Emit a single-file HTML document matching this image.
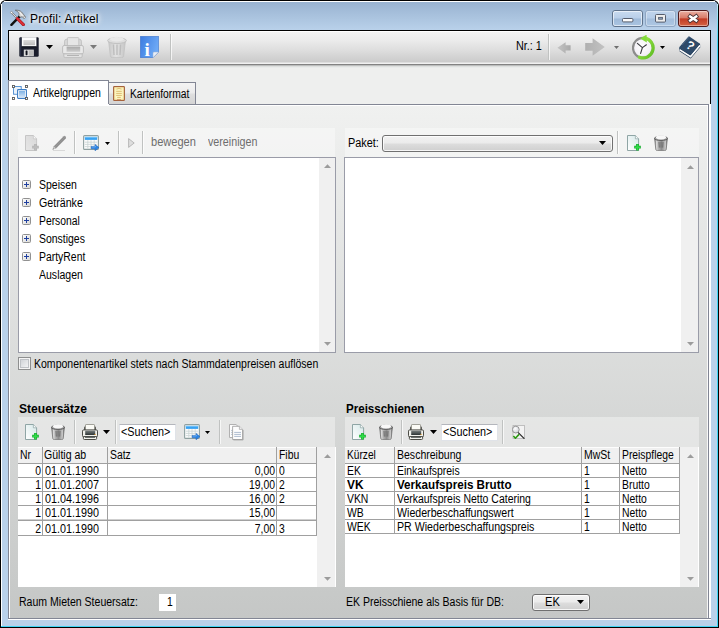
<!DOCTYPE html>
<html lang="de"><head><meta charset="utf-8"><title>Profil: Artikel</title>
<style>
html,body{margin:0;padding:0;background:#fff;}
body{width:719px;height:628px;overflow:hidden;position:relative;font-family:"Liberation Sans",sans-serif;font-size:11px;color:#000;}
div,svg{position:absolute;box-sizing:border-box;}
.t{white-space:pre;font-size:12px;line-height:14px;color:#000;transform:scaleX(.865);transform-origin:0 0;}
.r{width:200px;text-align:right;transform-origin:100% 0;}
.b{white-space:pre;font-size:12px;line-height:14px;font-weight:bold;color:#000;transform:scaleX(.93);transform-origin:0 0;}
.h{white-space:pre;font-size:12px;line-height:14px;font-weight:bold;color:#000;transform:scaleX(.97);transform-origin:0 0;}
.s{white-space:pre;font-size:12px;line-height:14px;color:#000;transform:scaleX(.88);transform-origin:0 0;}
#win{left:0;top:0;width:719px;height:628px;border-radius:6px 6px 0 0;background:#000;overflow:hidden;}
#frame{left:1px;top:1px;width:717px;height:626px;border-radius:5px 5px 0 0;background:linear-gradient(#9ab4d2 0px,#9ab4d2 2px,#b9d1ea 29px,#b9d1ea 100%);}
.hl{background:#fff;}
#tb{left:9px;top:31px;width:701px;height:31px;background:linear-gradient(#ffffff 0px,#ffffff 1px,#f3f3f3 1px,#ececec 9px,#dedede 19px,#cbcbcb 31px);}
#page{left:8px;top:104px;width:701px;height:515px;border:1px solid #828694;background:linear-gradient(#f0f1f0 0px,#c5c7c6 513px);}
.strip{background:rgba(255,255,255,0.38);}
.box{background:#fff;border:1px solid #9a9ca8;}
.sb{background:#f0f0f0;}
.sep{width:1px;background:#c0c2c1;}
.sep:after{content:"";position:absolute;left:1px;top:0;width:1px;height:100%;background:rgba(255,255,255,0.7);}
.combo{border:1px solid #707070;border-radius:3px;background:linear-gradient(#f2f2f2 0%,#ebebeb 48%,#dddddd 52%,#cfcfcf 100%);box-shadow:inset 0 0 0 1px rgba(255,255,255,0.8);}
.arr{width:0;height:0;border-left:3.5px solid transparent;border-right:3.5px solid transparent;border-top:4px solid #000;}
.arrs{width:0;height:0;border-left:3px solid transparent;border-right:3px solid transparent;border-top:3px solid #000;}
.hdr{background:#f0f0f0;border-top:1px solid #fdfdfd;}
.gl{background:#a0a0a0;}
.srch{background:#fff;border:1px solid #e0e3e8;border-top-color:#b4b6bc;}
</style></head>
<body>
<div id="win"><div id="frame"></div>
<div class="hl" style="left:4px;top:1px;width:711px;height:1px"></div>
<div class="hl" style="left:1px;top:4px;width:1px;height:623px"></div>
<div style="left:717px;top:4px;width:1px;height:623px;background:linear-gradient(#bfeaf7 0px,#8fe2f6 14px,#3fd4f4 40px)"></div>
<div style="left:1px;top:626px;width:717px;height:1px;background:#3fd4f4"></div>
<svg style="left:9px;top:8px" width="18" height="18" viewBox="9 8 18 18">
<path d="M19.9 16.1L11.4 24.8" stroke="#111" stroke-width="2.4" stroke-linecap="round"/>
<path d="M15.2 10.2C17.6 9.9 20.2 10.6 21.6 12L23.4 14.2L25.2 16.6C25.4 17.8 24.6 18.6 23.6 18.2L22.2 16.8L20.2 17.2L18.8 15.6C19.6 13.6 18.2 11.4 15.2 10.2Z" fill="#d8d8d8" stroke="#5c5c5c" stroke-width=".7"/>
<path d="M20 12.4L22.6 16" stroke="#f0f0f0" stroke-width="1.2"/>
<path d="M11.6 12.6L17 18" stroke="#707070" stroke-width="1.7" stroke-linecap="round"/>
<path d="M11.6 12.6L17 18" stroke="#f2f2f2" stroke-width=".8" stroke-linecap="round"/>
<circle cx="11.5" cy="12.5" r="1.1" fill="#fff" stroke="#808080" stroke-width=".6"/>
<path d="M17.3 18.5L23.4 24.6" stroke="#a01018" stroke-width="3" stroke-linecap="round"/>
<path d="M17.3 18.5L23.4 24.6" stroke="#e0303a" stroke-width="1.8" stroke-linecap="round"/>
<circle cx="24.4" cy="17.4" r=".9" fill="#fff" stroke="#666" stroke-width=".5"/>
</svg>
<div class="s" style="left:30px;top:12px;font-size:12px;letter-spacing:0.13px;transform:none;text-shadow:0 0 4px #fff,0 0 6px #fff,0 0 8px rgba(255,255,255,.8)">Profil: Artikel</div>
<svg style="left:608px;top:6px" width="104" height="24" viewBox="608 6 104 24"><defs>
<linearGradient id="g1" x1="0" y1="0" x2="0" y2="1"><stop offset="0" stop-color="#cadcf0"/><stop offset=".47" stop-color="#b9cfe9"/><stop offset=".53" stop-color="#9fbad9"/><stop offset="1" stop-color="#abc5e2"/></linearGradient>
<linearGradient id="g2" x1="0" y1="0" x2="0" y2="1"><stop offset="0" stop-color="#c0d4ec"/><stop offset=".47" stop-color="#b6cde8"/><stop offset=".53" stop-color="#a3bddb"/><stop offset="1" stop-color="#afc8e4"/></linearGradient>
<linearGradient id="g3" x1="0" y1="0" x2="0" y2="1"><stop offset="0" stop-color="#ebb3a6"/><stop offset=".45" stop-color="#d97c6a"/><stop offset=".53" stop-color="#c23c26"/><stop offset="1" stop-color="#d66646"/></linearGradient>
</defs>
<rect x="612.5" y="10.5" width="30" height="16" rx="2.5" fill="url(#g1)" stroke="#5f738c"/>
<rect x="613.5" y="11.5" width="28" height="14" rx="1.5" fill="none" stroke="#fff" stroke-opacity=".6"/>
<rect x="622.5" y="18.5" width="10.4" height="3.4" rx="1" fill="#fbfbfb" stroke="#555c6c" stroke-width="1"/>
<rect x="645.5" y="10.5" width="30" height="16" rx="2.5" fill="url(#g2)" stroke="#8fa6c2"/>
<rect x="646.5" y="11.5" width="28" height="14" rx="1.5" fill="none" stroke="#fff" stroke-opacity=".35"/>
<rect x="655.5" y="14.5" width="10" height="7.6" rx="1" fill="#ececec" stroke="#555c6c" stroke-width="1"/>
<rect x="658.6" y="17.4" width="3.8" height="1.8" fill="#8fa9c8" stroke="#555c6c" stroke-width=".9"/>
<rect x="678.5" y="10.5" width="30" height="16" rx="2.5" fill="url(#g3)" stroke="#4e1a1c"/>
<rect x="679.5" y="11.5" width="28" height="14" rx="1.5" fill="none" stroke="#fff" stroke-opacity=".4"/>
<path d="M690.2 16.4L696.2 20.6M696.2 16.4L690.2 20.6" stroke="#4a3236" stroke-width="4.2" stroke-linecap="square"/>
<path d="M690.2 16.4L696.2 20.6M696.2 16.4L690.2 20.6" stroke="#fff" stroke-width="2.5" stroke-linecap="square"/>
</svg>
<div style="left:8px;top:30px;width:703px;height:590px;background:#000"></div>
<div style="left:9px;top:31px;width:701px;height:587px;background:#eeefee"></div>
<div style="left:8px;top:80px;width:1px;height:539px;background:#828694"></div>
<div style="left:709px;top:104px;width:2px;height:516px;background:#fff"></div>
<div style="left:8px;top:618px;width:703px;height:1px;background:#828694"></div>
<div style="left:8px;top:619px;width:703px;height:1px;background:#fff"></div>
<div id="tb"></div>
<div style="left:9px;top:62px;width:701px;height:1px;background:#dedede"></div>
<div style="left:9px;top:63px;width:701px;height:1px;background:#f0f0f0"></div>
<div style="left:9px;top:64px;width:701px;height:1px;background:#828282"></div>
<div style="left:9px;top:65px;width:701px;height:1px;background:#bcbebd"></div>
<div style="left:9px;top:66px;width:701px;height:1px;background:#dddfde"></div>
<div style="left:9px;top:67px;width:701px;height:1px;background:#e9ebea"></div>
<svg style="left:19px;top:37px" width="20" height="20" viewBox="0 0 20 20"><defs><linearGradient id="g4" x1="0" y1="0" x2="0" y2="1"><stop offset="0" stop-color="#dcdcdc"/><stop offset="1" stop-color="#bcbcbc"/></linearGradient></defs>
<rect x=".3" y=".3" width="19.4" height="19.4" rx="1.2" fill="#1b1e2d"/>
<rect x="1" y="1" width="1.2" height="18" fill="#2c3146"/>
<rect x="2.8" y=".2" width="14.6" height="9.2" fill="#fdfdfd"/>
<rect x="4.4" y="3" width="11.6" height="5.2" fill="url(#g4)"/>
<rect x="2.8" y="9.4" width="14.6" height="1" fill="#0d0f18"/>
<rect x="4.8" y="12.6" width="10" height="6.6" fill="#d9d9d9"/>
<rect x="10" y="13.4" width="4" height="5.2" fill="#bdbdbd"/>
<rect x="6.6" y="13.6" width="1.9" height="4.6" rx=".8" fill="#10121c"/></svg>
<svg style="left:46px;top:45px" width="7" height="4" viewBox="0 0 7 4"><path d="M0 0H7L3.5 4Z" fill="#000"/></svg>
<svg style="left:62px;top:37px" width="22" height="22" viewBox="0 0 22 22"><defs><linearGradient id="g5" x1="0" y1="0" x2="0" y2="1"><stop offset="0" stop-color="#a9a9a9"/><stop offset="1" stop-color="#cdcdcd"/></linearGradient></defs>
<path d="M2.6 9V4.2Q2.6 2.4 4.4 2.4H17.6Q19.4 2.4 19.4 4.2V9Z" fill="#d9d9d9" stroke="#bebebe" stroke-width=".9"/>
<rect x="5.4" y=".6" width="11.4" height="9" rx=".8" fill="#e6e6e6" stroke="#c2c2c2" stroke-width=".9"/>
<rect x=".6" y="8.5" width="20.8" height="8.4" rx="1.6" fill="#e9e9e9" stroke="#b9b9b9" stroke-width=".9"/>
<rect x="4.6" y="9.6" width="13.6" height="5.2" fill="url(#g5)"/>
<path d="M1.8 16.9H20.2V19.2Q20.2 20.6 18.8 20.6H3.2Q1.8 20.6 1.8 19.2Z" fill="#e2e2e2" stroke="#bcbcbc" stroke-width=".9"/>
<rect x="5" y="18" width="12" height="1" fill="#b4b4b4"/></svg>
<svg style="left:90px;top:45px" width="7" height="4" viewBox="0 0 7 4"><path d="M0 0H7L3.5 4Z" fill="#7a7a7a"/></svg>
<svg style="left:107px;top:36px" width="20" height="22" viewBox="0 0 20 22"><defs><linearGradient id="g6" x1="0" y1="0" x2="1" y2="0"><stop offset="0" stop-color="#c9c9c9"/><stop offset=".45" stop-color="#e2e2e2"/><stop offset="1" stop-color="#c6c6c6"/></linearGradient></defs>
<path d="M1.6 5L3.4 20.2Q3.6 21.6 5.4 21.6H14.6Q16.4 21.6 16.6 20.2L18.4 5Z" fill="url(#g6)" stroke="#c2c2c2" stroke-width=".8"/>
<path d="M6.4 8.5L7 19M10 8.5V19M13.6 8.5L13 19" stroke="#bdbdbd" stroke-width="1.4"/>
<ellipse cx="10" cy="4.6" rx="9.4" ry="2.9" fill="#dedede" stroke="#bdbdbd" stroke-width=".9"/>
<path d="M2.6 3.6Q4 .4 7 1.4Q9 -.2 11.6 1.2Q15 .2 17.4 3.6Q14 5.6 10 5.6Q5 5.6 2.6 3.6Z" fill="#e9e9e9"/></svg>
<svg style="left:140px;top:36px" width="19" height="22" viewBox="0 0 19 22"><defs><linearGradient id="g7" x1="0" y1="0" x2="1" y2=".4"><stop offset="0" stop-color="#3c7be0"/><stop offset="1" stop-color="#6eaaf6"/></linearGradient></defs>
<path d="M.3 .3H18.7V16L13 21.7H.3Z" fill="url(#g7)" stroke="#3a6ec4" stroke-width=".6"/>
<path d="M13 21.7V17Q13 16 14 16H18.7Z" fill="#e9eef6" stroke="#9ab0d0" stroke-width=".5"/>
<text x="7.1" y="19.8" font-family="Liberation Serif,serif" font-weight="bold" font-size="19" text-anchor="middle" fill="#fff">i</text></svg>
<div class="sep" style="left:170px;top:34px;height:26px"></div>
<div class="s" style="left:516px;top:39px;transform:scaleX(0.903);">Nr.: 1</div>
<div class="sep" style="left:548px;top:34px;height:26px"></div>
<svg style="left:557px;top:42px" width="14" height="12" viewBox="0 0 14 12"><defs><linearGradient id="g8" x1="0" y1="0" x2="1" y2="0"><stop offset="0" stop-color="#c4c4c4"/><stop offset="1" stop-color="#a9a9a9"/></linearGradient></defs>
<path d="M.4 5.8L8.6 .2V3.2H13.6V8.6H8.6V11.6Z" fill="url(#g8)"/></svg>
<svg style="left:585px;top:38px" width="20" height="18" viewBox="0 0 20 18"><defs><linearGradient id="g9" x1="0" y1="0" x2="1" y2="0"><stop offset="0" stop-color="#b0b0b0"/><stop offset="1" stop-color="#c2c2c2"/></linearGradient></defs>
<path d="M19.8 9L7.6 .2V5H.2V12.8H7.6V17.8Z" fill="url(#g9)"/></svg>
<svg style="left:614px;top:46px" width="5" height="3" viewBox="0 0 5 3"><path d="M0 0H5L2.5 3Z" fill="#6e6e6e"/></svg>
<svg style="left:632px;top:35px" width="23" height="25" viewBox="0 0 23 25"><defs><radialGradient id="g10" cx=".45" cy=".42" r=".62"><stop offset="0" stop-color="#fff"/><stop offset=".72" stop-color="#f3f0f6"/><stop offset="1" stop-color="#cfccd4"/></radialGradient>
<linearGradient id="g11" x1="0" y1="0" x2="1" y2="1"><stop offset="0" stop-color="#a6ee4e"/><stop offset="1" stop-color="#5cbc22"/></linearGradient></defs>
<circle cx="11" cy="12.9" r="10" fill="url(#g10)" stroke="#8c8c8c" stroke-width="2.2"/>
<path d="M12.4 3A10 10 0 1 1 7.4 22.2" fill="none" stroke="url(#g11)" stroke-width="3.2" stroke-linecap="round"/>
<path d="M14.6 -.4L8.2 3.6L14.8 7.6Z" fill="#84dc3a"/>
<path d="M10.4 12.6L5.4 8.4M10.4 12.6L14.4 9.8M10.4 12.6L8.6 18.4" stroke="#3a3a3e" stroke-width="1.15" stroke-linecap="round"/></svg>
<svg style="left:660px;top:46px" width="5" height="3" viewBox="0 0 5 3"><path d="M0 0H5L2.5 3Z" fill="#000"/></svg>
<svg style="left:679px;top:36px" width="22" height="23" viewBox="0 0 22 23"><path d="M.2 12.2L.5 15.2L11.7 22.4L21.3 11.2L21 7.7Z" fill="#1f3854"/>
<path d="M.6 13.6L11.6 20.6L21 9.4" fill="none" stroke="#fbfbfb" stroke-width="1.7"/>
<path d="M10 .3L21 7.7L11.7 18.9L.6 12.4Q-.2 11.6 .6 10.8Z" fill="#2e4a69"/>
<path d="M10 .8L3 8.8" stroke="#48627f" stroke-width="1.2"/>
<text x="11.4" y="13.8" font-family="Liberation Sans,sans-serif" font-weight="bold" font-size="12" text-anchor="middle" fill="#fff" transform="rotate(33 11.4 9.6)">?</text></svg>
<div id="page"></div>
<div class="hl" style="left:9px;top:105px;width:699px;height:1px"></div>
<div class="hl" style="left:9px;top:105px;width:1px;height:513px"></div>
<div class="hl" style="left:707px;top:105px;width:1px;height:513px;opacity:.8"></div>
<div style="left:108px;top:82px;width:88px;height:22px;border:1px solid #828694;border-bottom:none;border-left:none;background:linear-gradient(#f4f4f4 0%,#ececec 45%,#dedede 55%,#d4d4d4 100%)"></div>
<div style="left:8px;top:80px;width:101px;height:24px;border:1px solid #828694;border-bottom:none;background:#fff"></div>
<div style="left:9px;top:104px;width:100px;height:2px;background:#fff"></div>
<svg style="left:12px;top:85px" width="16" height="15" viewBox="0 0 16 15"><defs><linearGradient id="g12" x1="0" y1="0" x2="0" y2="1"><stop offset="0" stop-color="#7fb2e4"/><stop offset="1" stop-color="#cfe2f6"/></linearGradient></defs>
<rect x="1.6" y="1.6" width="7.6" height="7.6" fill="#fdfeff" stroke="#4a8bd0" stroke-width="1"/>
<rect x="2.6" y="2.6" width="5.6" height="5.6" fill="#eaf2fb"/>
<rect x="5.6" y="4.6" width="8.8" height="8.8" rx=".6" fill="#fff" stroke="#3b7cc4" stroke-width="1.1"/>
<rect x="7" y="6" width="6" height="6" fill="url(#g12)"/>
<g fill="#fff" stroke="#5a5a5a" stroke-width=".9"><rect x=".5" y=".5" width="2" height="2"/><rect x="13.5" y=".5" width="2" height="2"/><rect x=".5" y="12.5" width="2" height="2"/><rect x="13.5" y="12.5" width="2" height="2"/></g></svg>
<div class="t" style="left:33px;top:86px;transform:scaleX(0.877);">Artikelgruppen</div>
<svg style="left:113px;top:86px" width="12" height="15" viewBox="0 0 12 15"><rect x=".7" y=".7" width="10.6" height="13.6" rx=".6" fill="#fdf8c6" stroke="#a5623c" stroke-width="1.3"/>
<rect x="1.8" y="1.8" width="8.4" height="11.4" fill="none" stroke="#f3e19a" stroke-width=".8"/>
<path d="M3.4 3.1Q6 1.9 8.6 3.1" fill="none" stroke="#d9b566" stroke-width=".9"/>
<path d="M3.2 5.3H8.8M3.2 7.4H8.8M3.2 9.4H8.8M4.2 11.4H7.8" stroke="#d9b566" stroke-width=".9"/>
<path d="M4 13.6H8" stroke="#c98a5a" stroke-width=".8"/></svg>
<div class="t" style="left:130px;top:87px;transform:scaleX(0.856);">Kartenformat</div>
<div class="strip" style="left:18px;top:128px;width:317px;height:29px"></div>
<div class="strip" style="left:345px;top:128px;width:354px;height:29px"></div>
<svg style="left:25px;top:135px" width="15" height="17" viewBox="0 0 15 17"><defs><linearGradient id="g13" x1="1" y1="0" x2="0" y2="1"><stop offset="0" stop-color="#d8d8d8"/><stop offset="1" stop-color="#e6e6e6"/></linearGradient></defs>
<path d="M.5 .5H8.4L11.6 3.8V15.5H.5Z" fill="url(#g13)" stroke="#c6c6c6" stroke-width="1" stroke-linejoin="round"/>
<path d="M8.4 .5V3.8H11.6" fill="#fff" fill-opacity=".8" stroke="#c6c6c6" stroke-width=".7"/>
<path d="M10.5 8.9V15.5M7.2 12.2H13.8" stroke="#b4b4b4" stroke-width="2.8"/>
<path d="M10.5 9.5V14.9M7.8 12.2H13.2" stroke="#bdbdbd" stroke-width="1.6"/></svg>
<svg style="left:52px;top:135px" width="15" height="16" viewBox="0 0 15 16"><path d="M.6 14.6L1.8 11.2L11.6 1.2Q12.6 .4 13.6 1.4Q14.6 2.4 13.8 3.4L4 13.4Z" fill="#9a9a9a"/>
<path d="M2.6 11.6L12.2 2M3.6 12.6L13.2 3" stroke="#808080" stroke-width=".6"/>
<path d="M.6 14.6L1.8 11.2L4 13.4Z" fill="#c8c8c8"/><path d="M.6 14.6L1.2 13.2L2 14Z" fill="#707070"/>
<path d="M1 15.5H13" stroke="#d0d0d0" stroke-width=".8"/></svg>
<div class="sep" style="left:74px;top:131px;height:23px"></div>
<svg style="left:83px;top:135px" width="17" height="16" viewBox="0 0 17 16"><rect x=".6" y=".6" width="14.8" height="13.8" rx="1" fill="#fbfcfc" stroke="#8fa0a0" stroke-width="1.1"/>
<rect x="1.8" y="1.9" width="12.4" height="3" fill="#39a2f2"/>
<rect x="1.8" y="1.9" width="12.4" height="1" fill="#6dc0fa"/>
<path d="M1.8 7.2H14.2M1.8 9.4H14.2M1.8 11.6H14.2M4.8 5.2V13.6M8 5.2V13.6M11.2 5.2V13.6" stroke="#c9d3d3" stroke-width=".8"/>
<path d="M8.2 11.4H12V9.4L16 12.6L12 15.8V13.8H8.2Z" fill="#2b84e4" stroke="#1a62b8" stroke-width=".5"/>
<path d="M9 12H12.4V10.8" stroke="#8cc4fa" stroke-width=".6" fill="none"/></svg>
<svg style="left:105px;top:142px" width="5" height="3" viewBox="0 0 5 3"><path d="M0 0H5L2.5 3Z" fill="#000"/></svg>
<div class="sep" style="left:118px;top:131px;height:23px"></div>
<svg style="left:128px;top:138px" width="7" height="10" viewBox="0 0 7 10"><path d="M.6 .6L6.2 5L.6 9.4Z" fill="#dedede" stroke="#b2b2b2" stroke-width=".9" stroke-linejoin="round"/></svg>
<div class="sep" style="left:142px;top:131px;height:23px"></div>
<div class="s" style="left:151px;top:135px;transform:scaleX(0.922);color:#6d6d6d">bewegen</div>
<div class="s" style="left:208px;top:135px;transform:scaleX(0.892);color:#6d6d6d">vereinigen</div>
<div class="s" style="left:348px;top:136px;transform:scaleX(0.908);">Paket:</div>
<div class="combo" style="left:382px;top:135px;width:231px;height:17px"></div>
<svg style="left:599px;top:141px" width="7" height="4" viewBox="0 0 7 4"><path d="M0 0H7L3.5 4Z" fill="#000"/></svg>
<div class="sep" style="left:617px;top:131px;height:23px"></div>
<svg style="left:627px;top:135px" width="15" height="17" viewBox="0 0 15 17"><defs><linearGradient id="g14" x1="1" y1="0" x2="0" y2="1"><stop offset="0" stop-color="#d6e8e8"/><stop offset="1" stop-color="#ffffff"/></linearGradient></defs>
<path d="M.5 .5H8.4L11.6 3.8V15.5H.5Z" fill="url(#g14)" stroke="#8fa5a5" stroke-width="1" stroke-linejoin="round"/>
<path d="M8.4 .5V3.8H11.6" fill="#fff" fill-opacity=".8" stroke="#8fa5a5" stroke-width=".7"/>
<path d="M10.5 8.9V15.5M7.2 12.2H13.8" stroke="#14a82c" stroke-width="2.8"/>
<path d="M10.5 9.5V14.9M7.8 12.2H13.2" stroke="#2fdc48" stroke-width="1.6"/></svg>
<svg style="left:654px;top:135px" width="14" height="16" viewBox="0 0 14 16"><defs><linearGradient id="g15" x1="0" y1="0" x2="1" y2="0"><stop offset="0" stop-color="#646464"/><stop offset=".13" stop-color="#dcdcdc"/><stop offset=".3" stop-color="#b2b2b2"/><stop offset=".55" stop-color="#8c8c8c"/><stop offset=".85" stop-color="#c6c6c6"/><stop offset="1" stop-color="#626262"/></linearGradient></defs>
<path d="M.6 3.4L1.8 14.4Q2 15.6 3.4 15.6H10.6Q12 15.6 12.2 14.4L13.4 3.4Z" fill="url(#g15)" stroke="#6a6a6a" stroke-width=".7"/>
<path d="M5 7L5.3 12.6M7 7V12.6M9 7L8.7 12.6" stroke="#6e6e6e" stroke-width="1"/>
<ellipse cx="7" cy="3.4" rx="6.6" ry="2.1" fill="#9c9c9c" stroke="#5e5e5e" stroke-width=".9"/>
<path d="M1.6 3Q2.4 .2 4.8 .9Q7 -.4 9.2 .8Q11.8 .2 12.4 3Q10 4.6 7 4.6Q3.8 4.6 1.6 3Z" fill="#f8f8f8"/></svg>
<div class="box" style="left:18px;top:157px;width:318px;height:196px"></div>
<div class="sb" style="left:319px;top:158px;width:16px;height:194px"></div>
<svg style="left:324px;top:164px" width="7" height="4" viewBox="0 0 7 4"><path d="M0 4L3.5 0.2L7 4Z" fill="#9c9c9c"/></svg>
<svg style="left:324px;top:342px" width="7" height="4" viewBox="0 0 7 4"><path d="M0 0L3.5 3.8L7 0Z" fill="#9c9c9c"/></svg>
<svg style="left:22px;top:180px" width="9" height="9" viewBox="0 0 9 9"><defs><linearGradient id="g16" x1="0" y1="0" x2="1" y2="1"><stop offset="0" stop-color="#fff"/><stop offset="1" stop-color="#d6d6d2"/></linearGradient></defs><rect x=".5" y=".5" width="8" height="8" rx="1" fill="url(#g16)" stroke="#919191"/><path d="M2 4.5H7M4.5 2V7" stroke="#1f3f9f" stroke-width="1"/></svg>
<div class="t" style="left:39px;top:178px;transform:scaleX(0.874);">Speisen</div>
<svg style="left:22px;top:198px" width="9" height="9" viewBox="0 0 9 9"><defs><linearGradient id="g17" x1="0" y1="0" x2="1" y2="1"><stop offset="0" stop-color="#fff"/><stop offset="1" stop-color="#d6d6d2"/></linearGradient></defs><rect x=".5" y=".5" width="8" height="8" rx="1" fill="url(#g17)" stroke="#919191"/><path d="M2 4.5H7M4.5 2V7" stroke="#1f3f9f" stroke-width="1"/></svg>
<div class="t" style="left:39px;top:196px;transform:scaleX(0.889);">Getränke</div>
<svg style="left:22px;top:216px" width="9" height="9" viewBox="0 0 9 9"><defs><linearGradient id="g18" x1="0" y1="0" x2="1" y2="1"><stop offset="0" stop-color="#fff"/><stop offset="1" stop-color="#d6d6d2"/></linearGradient></defs><rect x=".5" y=".5" width="8" height="8" rx="1" fill="url(#g18)" stroke="#919191"/><path d="M2 4.5H7M4.5 2V7" stroke="#1f3f9f" stroke-width="1"/></svg>
<div class="t" style="left:39px;top:214px;transform:scaleX(0.863);">Personal</div>
<svg style="left:22px;top:234px" width="9" height="9" viewBox="0 0 9 9"><defs><linearGradient id="g19" x1="0" y1="0" x2="1" y2="1"><stop offset="0" stop-color="#fff"/><stop offset="1" stop-color="#d6d6d2"/></linearGradient></defs><rect x=".5" y=".5" width="8" height="8" rx="1" fill="url(#g19)" stroke="#919191"/><path d="M2 4.5H7M4.5 2V7" stroke="#1f3f9f" stroke-width="1"/></svg>
<div class="t" style="left:39px;top:232px;transform:scaleX(0.871);">Sonstiges</div>
<svg style="left:22px;top:252px" width="9" height="9" viewBox="0 0 9 9"><defs><linearGradient id="g20" x1="0" y1="0" x2="1" y2="1"><stop offset="0" stop-color="#fff"/><stop offset="1" stop-color="#d6d6d2"/></linearGradient></defs><rect x=".5" y=".5" width="8" height="8" rx="1" fill="url(#g20)" stroke="#919191"/><path d="M2 4.5H7M4.5 2V7" stroke="#1f3f9f" stroke-width="1"/></svg>
<div class="t" style="left:39px;top:250px;transform:scaleX(0.868);">PartyRent</div>
<div class="t" style="left:39px;top:268px;transform:scaleX(0.877);">Auslagen</div>
<div class="box" style="left:344px;top:157px;width:355px;height:196px"></div>
<div class="sb" style="left:681px;top:158px;width:17px;height:194px"></div>
<svg style="left:687px;top:165px" width="7" height="4" viewBox="0 0 7 4"><path d="M0 4L3.5 0.2L7 4Z" fill="#9c9c9c"/></svg>
<svg style="left:687px;top:342px" width="7" height="4" viewBox="0 0 7 4"><path d="M0 0L3.5 3.8L7 0Z" fill="#9c9c9c"/></svg>
<svg style="left:18px;top:357px" width="13" height="13" viewBox="0 0 13 13"><defs><linearGradient id="g21" x1="0" y1="0" x2="1" y2="1"><stop offset="0" stop-color="#cfd2d6"/><stop offset="1" stop-color="#f4f5f6"/></linearGradient></defs><rect x=".5" y=".5" width="12" height="12" fill="#f4f4f4" stroke="#8e8f8f"/><rect x="2.5" y="2.5" width="8" height="8" fill="url(#g21)" stroke="#bfc2c6"/></svg>
<div class="t" style="left:34px;top:357px;transform:scaleX(0.877);">Komponentenartikel stets nach Stammdatenpreisen auflösen</div>
<div class="h" style="left:19px;top:402px;transform:scaleX(1.008);">Steuersätze</div>
<div class="h" style="left:346px;top:402px;transform:scaleX(0.963);">Preisschienen</div>
<div class="strip" style="left:18px;top:417px;width:317px;height:30px"></div>
<div class="strip" style="left:345px;top:417px;width:354px;height:30px"></div>
<svg style="left:25px;top:424px" width="15" height="17" viewBox="0 0 15 17"><defs><linearGradient id="g22" x1="1" y1="0" x2="0" y2="1"><stop offset="0" stop-color="#d6e8e8"/><stop offset="1" stop-color="#ffffff"/></linearGradient></defs>
<path d="M.5 .5H8.4L11.6 3.8V15.5H.5Z" fill="url(#g22)" stroke="#8fa5a5" stroke-width="1" stroke-linejoin="round"/>
<path d="M8.4 .5V3.8H11.6" fill="#fff" fill-opacity=".8" stroke="#8fa5a5" stroke-width=".7"/>
<path d="M10.5 8.9V15.5M7.2 12.2H13.8" stroke="#14a82c" stroke-width="2.8"/>
<path d="M10.5 9.5V14.9M7.8 12.2H13.2" stroke="#2fdc48" stroke-width="1.6"/></svg>
<svg style="left:51px;top:424px" width="14" height="16" viewBox="0 0 14 16"><defs><linearGradient id="g23" x1="0" y1="0" x2="1" y2="0"><stop offset="0" stop-color="#646464"/><stop offset=".13" stop-color="#dcdcdc"/><stop offset=".3" stop-color="#b2b2b2"/><stop offset=".55" stop-color="#8c8c8c"/><stop offset=".85" stop-color="#c6c6c6"/><stop offset="1" stop-color="#626262"/></linearGradient></defs>
<path d="M.6 3.4L1.8 14.4Q2 15.6 3.4 15.6H10.6Q12 15.6 12.2 14.4L13.4 3.4Z" fill="url(#g23)" stroke="#6a6a6a" stroke-width=".7"/>
<path d="M5 7L5.3 12.6M7 7V12.6M9 7L8.7 12.6" stroke="#6e6e6e" stroke-width="1"/>
<ellipse cx="7" cy="3.4" rx="6.6" ry="2.1" fill="#9c9c9c" stroke="#5e5e5e" stroke-width=".9"/>
<path d="M1.6 3Q2.4 .2 4.8 .9Q7 -.4 9.2 .8Q11.8 .2 12.4 3Q10 4.6 7 4.6Q3.8 4.6 1.6 3Z" fill="#f8f8f8"/></svg>
<div class="sep" style="left:74px;top:420px;height:24px"></div>
<svg style="left:82px;top:424px" width="16" height="16" viewBox="0 0 16 16"><defs><linearGradient id="g24" x1="0" y1="0" x2="0" y2="1"><stop offset="0" stop-color="#7a8080"/><stop offset="1" stop-color="#2e3434"/></linearGradient></defs>
<path d="M2 6.4V3.4Q2 2.4 3 2.4H13Q14 2.4 14 3.4V6.4Z" fill="#5a5a56"/>
<rect x="3.5" y=".5" width="9" height="6" rx=".6" fill="#fbfbf6" stroke="#8d8d84" stroke-width=".8"/>
<rect x=".5" y="5.9" width="15" height="7" rx="1.2" fill="#f1f1ec" stroke="#4b4b45" stroke-width="1"/>
<rect x="3.2" y="6.6" width="10" height="4.4" fill="url(#g24)"/>
<rect x="12.6" y="10" width="1" height="1" fill="#f0a020"/>
<path d="M1.4 12.6H14.6V14.6Q14.6 15.5 13.6 15.5H2.4Q1.4 15.5 1.4 14.6Z" fill="#f1f1ec" stroke="#4b4b45" stroke-width="1"/>
<rect x="3" y="12.6" width="10" height="1.1" fill="#3a3f3f"/></svg>
<svg style="left:103px;top:430px" width="7" height="4" viewBox="0 0 7 4"><path d="M0 0H7L3.5 4Z" fill="#000"/></svg>
<div class="sep" style="left:115px;top:420px;height:24px"></div>
<div class="srch" style="left:119px;top:424px;width:57px;height:17px"></div>
<div class="s" style="left:121px;top:425px;transform:scaleX(0.901);">&lt;Suchen&gt;</div>
<svg style="left:184px;top:424px" width="17" height="16" viewBox="0 0 17 16"><rect x=".6" y=".6" width="14.8" height="13.8" rx="1" fill="#fbfcfc" stroke="#8fa0a0" stroke-width="1.1"/>
<rect x="1.8" y="1.9" width="12.4" height="3" fill="#39a2f2"/>
<rect x="1.8" y="1.9" width="12.4" height="1" fill="#6dc0fa"/>
<path d="M1.8 7.2H14.2M1.8 9.4H14.2M1.8 11.6H14.2M4.8 5.2V13.6M8 5.2V13.6M11.2 5.2V13.6" stroke="#c9d3d3" stroke-width=".8"/>
<path d="M8.2 11.4H12V9.4L16 12.6L12 15.8V13.8H8.2Z" fill="#2b84e4" stroke="#1a62b8" stroke-width=".5"/>
<path d="M9 12H12.4V10.8" stroke="#8cc4fa" stroke-width=".6" fill="none"/></svg>
<svg style="left:205px;top:431px" width="5" height="3" viewBox="0 0 5 3"><path d="M0 0H5L2.5 3Z" fill="#000"/></svg>
<div class="sep" style="left:219px;top:420px;height:24px"></div>
<svg style="left:229px;top:424px" width="15" height="17" viewBox="0 0 15 17"><path d="M.5 .5H7L9 2.4V13.5H.5Z" fill="#fdfdfd" stroke="#a9a9a9" stroke-width=".9"/>
<path d="M2 6.4H4M2 8.4H4M2 10.4H4" stroke="#b4c2d4" stroke-width=".9"/>
<path d="M3.6 2.3H10.4L13.6 5.4V15.5H3.6Z" fill="#fdfdfd" stroke="#a4a4a4" stroke-width=".9"/>
<path d="M10.4 2.3V5.4H13.6" fill="#f0f0f0" stroke="#a4a4a4" stroke-width=".7"/>
<path d="M5.2 8.4H12M5.2 10.4H12M5.2 12.4H12" stroke="#aebccf" stroke-width="1"/>
<path d="M14.1 6V16H4.4" stroke="#8c8c8c" stroke-width=".8" fill="none" opacity=".7"/></svg>
<div style="left:18px;top:447px;width:318px;height:140px;background:#fff"></div>
<div class="sb" style="left:317px;top:447px;width:18px;height:140px"></div>
<svg style="left:324px;top:454px" width="7" height="4" viewBox="0 0 7 4"><path d="M0 4L3.5 0.2L7 4Z" fill="#9c9c9c"/></svg>
<svg style="left:324px;top:577px" width="7" height="4" viewBox="0 0 7 4"><path d="M0 0L3.5 3.8L7 0Z" fill="#9c9c9c"/></svg>
<div class="hdr" style="left:18px;top:447px;width:299px;height:16px"></div>
<div class="gl" style="left:18px;top:463px;width:299px;height:1px"></div>
<div class="gl" style="left:18px;top:477px;width:299px;height:1px"></div>
<div class="gl" style="left:18px;top:491px;width:299px;height:1px"></div>
<div class="gl" style="left:18px;top:505px;width:299px;height:1px"></div>
<div class="gl" style="left:18px;top:520px;width:299px;height:1px"></div>
<div class="gl" style="left:18px;top:535px;width:299px;height:1px"></div>
<div class="gl" style="left:18px;top:519px;width:299px;height:1px;opacity:.5"></div>
<div class="gl" style="left:42px;top:447px;width:1px;height:89px"></div>
<div class="gl" style="left:107px;top:447px;width:1px;height:89px"></div>
<div class="gl" style="left:276px;top:447px;width:1px;height:89px"></div>
<div class="gl" style="left:316px;top:447px;width:1px;height:89px"></div>
<div class="t" style="left:20px;top:448px;">Nr</div>
<div class="t" style="left:44px;top:448px;transform:scaleX(0.879);">Gültig ab</div>
<div class="t" style="left:110px;top:448px;">Satz</div>
<div class="t" style="left:279px;top:448px;">Fibu</div>
<div class="t r" style="left:-159.5px;top:464px;">0</div>
<div class="t" style="left:45px;top:464px;transform:scaleX(0.897);">01.01.1990</div>
<div class="t r" style="left:75px;top:464px;">0,00</div>
<div class="t" style="left:279px;top:464px;">0</div>
<div class="t r" style="left:-159.5px;top:478px;">1</div>
<div class="t" style="left:45px;top:478px;transform:scaleX(0.897);">01.01.2007</div>
<div class="t r" style="left:75px;top:478px;">19,00</div>
<div class="t" style="left:279px;top:478px;">2</div>
<div class="t r" style="left:-159.5px;top:492px;">1</div>
<div class="t" style="left:45px;top:492px;transform:scaleX(0.897);">01.04.1996</div>
<div class="t r" style="left:75px;top:492px;">16,00</div>
<div class="t" style="left:279px;top:492px;">2</div>
<div class="t r" style="left:-159.5px;top:506px;">1</div>
<div class="t" style="left:45px;top:506px;transform:scaleX(0.897);">01.01.1990</div>
<div class="t r" style="left:75px;top:506px;">15,00</div>
<div class="t" style="left:279px;top:506px;"></div>
<div class="t r" style="left:-159.5px;top:522px;">2</div>
<div class="t" style="left:45px;top:522px;transform:scaleX(0.897);">01.01.1990</div>
<div class="t r" style="left:75px;top:522px;">7,00</div>
<div class="t" style="left:279px;top:522px;">3</div>
<svg style="left:352px;top:424px" width="15" height="17" viewBox="0 0 15 17"><defs><linearGradient id="g25" x1="1" y1="0" x2="0" y2="1"><stop offset="0" stop-color="#d6e8e8"/><stop offset="1" stop-color="#ffffff"/></linearGradient></defs>
<path d="M.5 .5H8.4L11.6 3.8V15.5H.5Z" fill="url(#g25)" stroke="#8fa5a5" stroke-width="1" stroke-linejoin="round"/>
<path d="M8.4 .5V3.8H11.6" fill="#fff" fill-opacity=".8" stroke="#8fa5a5" stroke-width=".7"/>
<path d="M10.5 8.9V15.5M7.2 12.2H13.8" stroke="#14a82c" stroke-width="2.8"/>
<path d="M10.5 9.5V14.9M7.8 12.2H13.2" stroke="#2fdc48" stroke-width="1.6"/></svg>
<svg style="left:379px;top:424px" width="14" height="16" viewBox="0 0 14 16"><defs><linearGradient id="g26" x1="0" y1="0" x2="1" y2="0"><stop offset="0" stop-color="#646464"/><stop offset=".13" stop-color="#dcdcdc"/><stop offset=".3" stop-color="#b2b2b2"/><stop offset=".55" stop-color="#8c8c8c"/><stop offset=".85" stop-color="#c6c6c6"/><stop offset="1" stop-color="#626262"/></linearGradient></defs>
<path d="M.6 3.4L1.8 14.4Q2 15.6 3.4 15.6H10.6Q12 15.6 12.2 14.4L13.4 3.4Z" fill="url(#g26)" stroke="#6a6a6a" stroke-width=".7"/>
<path d="M5 7L5.3 12.6M7 7V12.6M9 7L8.7 12.6" stroke="#6e6e6e" stroke-width="1"/>
<ellipse cx="7" cy="3.4" rx="6.6" ry="2.1" fill="#9c9c9c" stroke="#5e5e5e" stroke-width=".9"/>
<path d="M1.6 3Q2.4 .2 4.8 .9Q7 -.4 9.2 .8Q11.8 .2 12.4 3Q10 4.6 7 4.6Q3.8 4.6 1.6 3Z" fill="#f8f8f8"/></svg>
<div class="sep" style="left:401px;top:420px;height:24px"></div>
<svg style="left:408px;top:424px" width="16" height="16" viewBox="0 0 16 16"><defs><linearGradient id="g27" x1="0" y1="0" x2="0" y2="1"><stop offset="0" stop-color="#7a8080"/><stop offset="1" stop-color="#2e3434"/></linearGradient></defs>
<path d="M2 6.4V3.4Q2 2.4 3 2.4H13Q14 2.4 14 3.4V6.4Z" fill="#5a5a56"/>
<rect x="3.5" y=".5" width="9" height="6" rx=".6" fill="#fbfbf6" stroke="#8d8d84" stroke-width=".8"/>
<rect x=".5" y="5.9" width="15" height="7" rx="1.2" fill="#f1f1ec" stroke="#4b4b45" stroke-width="1"/>
<rect x="3.2" y="6.6" width="10" height="4.4" fill="url(#g27)"/>
<rect x="12.6" y="10" width="1" height="1" fill="#f0a020"/>
<path d="M1.4 12.6H14.6V14.6Q14.6 15.5 13.6 15.5H2.4Q1.4 15.5 1.4 14.6Z" fill="#f1f1ec" stroke="#4b4b45" stroke-width="1"/>
<rect x="3" y="12.6" width="10" height="1.1" fill="#3a3f3f"/></svg>
<svg style="left:430px;top:430px" width="7" height="4" viewBox="0 0 7 4"><path d="M0 0H7L3.5 4Z" fill="#000"/></svg>
<div class="srch" style="left:441px;top:424px;width:57px;height:17px"></div>
<div class="s" style="left:443px;top:425px;transform:scaleX(0.901);">&lt;Suchen&gt;</div>
<div class="sep" style="left:502px;top:420px;height:24px"></div>
<svg style="left:512px;top:425px" width="13" height="14" viewBox="0 0 13 14"><defs><radialGradient id="g28" cx=".4" cy=".35" r=".7"><stop offset="0" stop-color="#fff"/><stop offset="1" stop-color="#cfd0d8"/></radialGradient></defs>
<rect x="1" y=".5" width="11.5" height="13" fill="#f3f3f3" stroke="#b4b4b4" stroke-width=".8"/>
<path d="M6 7.4L12 13.4" stroke="#2c2c2c" stroke-width="1.25" stroke-linecap="round"/>
<circle cx="3.8" cy="4.6" r="3.4" fill="url(#g28)" stroke="#8c8c8c" stroke-width=".9"/>
<path d="M1.4 11L3.4 13.2L7 9.4" fill="none" stroke="#2c9a12" stroke-width="1.6"/></svg>
<div style="left:345px;top:447px;width:354px;height:140px;background:#fff"></div>
<div class="sb" style="left:680px;top:447px;width:18px;height:140px"></div>
<svg style="left:687px;top:454px" width="7" height="4" viewBox="0 0 7 4"><path d="M0 4L3.5 0.2L7 4Z" fill="#9c9c9c"/></svg>
<svg style="left:687px;top:577px" width="7" height="4" viewBox="0 0 7 4"><path d="M0 0L3.5 3.8L7 0Z" fill="#9c9c9c"/></svg>
<div class="hdr" style="left:345px;top:447px;width:335px;height:16px"></div>
<div class="gl" style="left:345px;top:463px;width:335px;height:1px"></div>
<div class="gl" style="left:345px;top:477px;width:335px;height:1px"></div>
<div class="gl" style="left:345px;top:491px;width:335px;height:1px"></div>
<div class="gl" style="left:345px;top:505px;width:335px;height:1px"></div>
<div class="gl" style="left:345px;top:519px;width:335px;height:1px"></div>
<div class="gl" style="left:345px;top:533px;width:335px;height:1px"></div>
<div class="gl" style="left:394px;top:447px;width:1px;height:87px"></div>
<div class="gl" style="left:581px;top:447px;width:1px;height:87px"></div>
<div class="gl" style="left:619px;top:447px;width:1px;height:87px"></div>
<div class="gl" style="left:679px;top:447px;width:1px;height:87px"></div>
<div class="t" style="left:347px;top:448px;transform:scaleX(0.847);">Kürzel</div>
<div class="t" style="left:397px;top:448px;transform:scaleX(0.877);">Beschreibung</div>
<div class="t" style="left:584px;top:448px;transform:scaleX(0.873);">MwSt</div>
<div class="t" style="left:622px;top:448px;transform:scaleX(0.861);">Preispflege</div>
<div class="t" style="left:347px;top:464px;">EK</div>
<div class="t" style="left:397px;top:464px;transform:scaleX(0.869);">Einkaufspreis</div>
<div class="t" style="left:584px;top:464px;">1</div>
<div class="t" style="left:622px;top:464px;">Netto</div>
<div class="b" style="left:347px;top:478px;transform:scaleX(0.990);">VK</div>
<div class="b" style="left:397px;top:478px;transform:scaleX(0.970);">Verkaufspreis Brutto</div>
<div class="t" style="left:584px;top:478px;">1</div>
<div class="t" style="left:622px;top:478px;">Brutto</div>
<div class="t" style="left:347px;top:492px;">VKN</div>
<div class="t" style="left:397px;top:492px;transform:scaleX(0.873);">Verkaufspreis Netto Catering</div>
<div class="t" style="left:584px;top:492px;">1</div>
<div class="t" style="left:622px;top:492px;">Netto</div>
<div class="t" style="left:347px;top:506px;">WB</div>
<div class="t" style="left:397px;top:506px;transform:scaleX(0.885);">Wiederbeschaffungswert</div>
<div class="t" style="left:584px;top:506px;">1</div>
<div class="t" style="left:622px;top:506px;">Netto</div>
<div class="t" style="left:347px;top:520px;">WEK</div>
<div class="t" style="left:397px;top:520px;transform:scaleX(0.885);">PR Wiederbeschaffungspreis</div>
<div class="t" style="left:584px;top:520px;">1</div>
<div class="t" style="left:622px;top:520px;">Netto</div>
<div class="t" style="left:19px;top:595px;transform:scaleX(0.878);">Raum Mieten Steuersatz:</div>
<div style="left:159px;top:594px;width:17px;height:17px;background:#fff"></div>
<div class="t" style="left:167px;top:595px;">1</div>
<div class="t" style="left:346px;top:595px;transform:scaleX(0.877);">EK Preisschiene als Basis für DB:</div>
<div class="combo" style="left:532px;top:594px;width:58px;height:17px"></div>
<div class="t" style="left:545px;top:595px;transform:scaleX(0.930);">EK</div>
<svg style="left:577px;top:600px" width="7" height="4" viewBox="0 0 7 4"><path d="M0 0H7L3.5 4Z" fill="#000"/></svg>
</div>
</body></html>
